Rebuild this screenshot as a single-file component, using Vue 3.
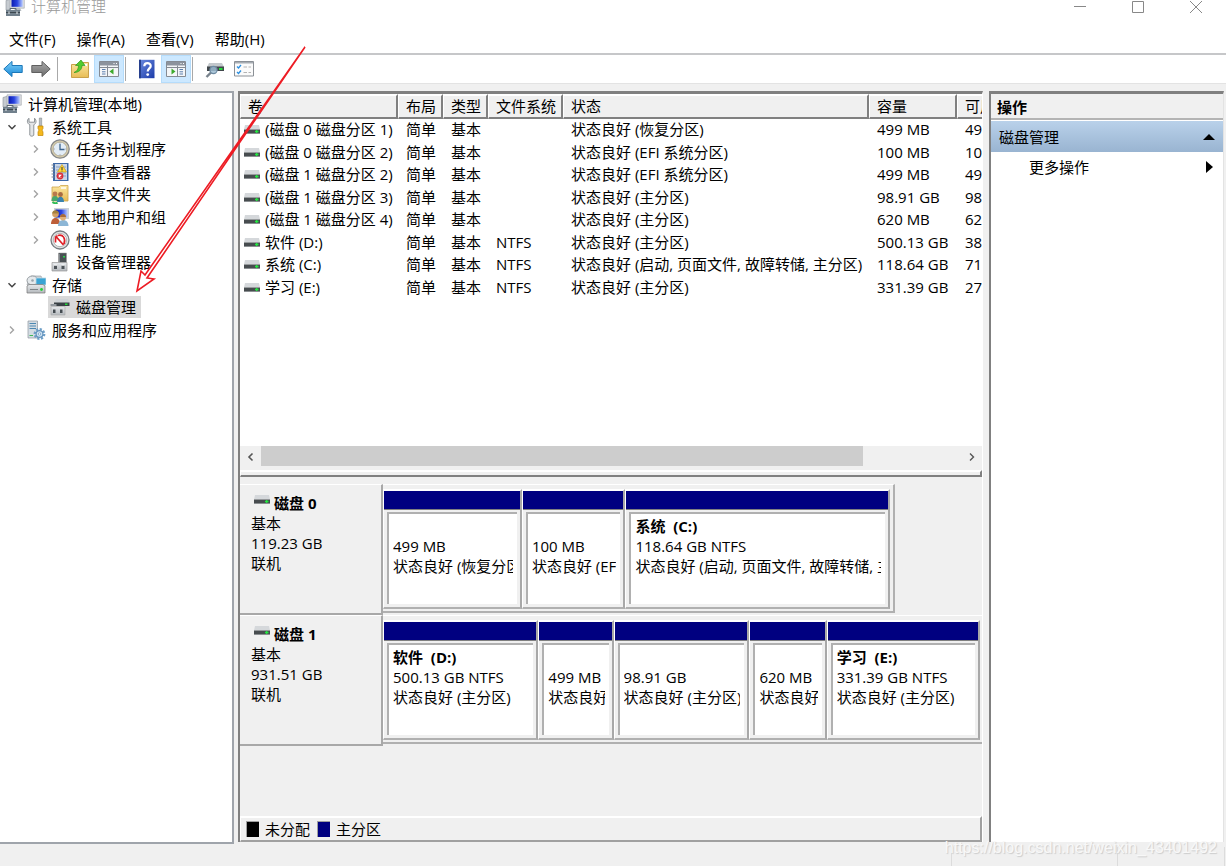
<script setup>
const menus = ['文件(F)', '操作(A)', '查看(V)', '帮助(H)']

const tools = [
  { icon: 'back', label: '后退' },
  { icon: 'forward', label: '前进' },
  { sep: true },
  { icon: 'folder-up', label: '向上一级' },
  { icon: 'tree-pane', label: '显示/隐藏控制台树', on: true },
  { sep: true },
  { icon: 'help', label: '帮助' },
  { icon: 'action-pane', label: '显示/隐藏操作窗格', on: true },
  { sep: true },
  { icon: 'rescan', label: '重新扫描磁盘' },
  { icon: 'list', label: '属性' }
]

const tree = [
  { level: 0, icon: 'computer', text: '计算机管理(本地)' },
  { level: 1, icon: 'tools', text: '系统工具', state: 'open' },
  { level: 2, icon: 'clock', text: '任务计划程序', state: 'closed' },
  { level: 2, icon: 'events', text: '事件查看器', state: 'closed' },
  { level: 2, icon: 'shared', text: '共享文件夹', state: 'closed' },
  { level: 2, icon: 'users', text: '本地用户和组', state: 'closed' },
  { level: 2, icon: 'perf', text: '性能', state: 'closed' },
  { level: 2, icon: 'device', text: '设备管理器' },
  { level: 1, icon: 'storage', text: '存储', state: 'open' },
  { level: 2, icon: 'diskmgmt', text: '磁盘管理', selected: true },
  { level: 1, icon: 'services', text: '服务和应用程序', state: 'closed' }
]

const columns = ['卷', '布局', '类型', '文件系统', '状态', '容量', '可用空间']

const volumes = [
  ['(磁盘 0 磁盘分区 1)', '简单', '基本', '', '状态良好 (恢复分区)', '499 MB', '49'],
  ['(磁盘 0 磁盘分区 2)', '简单', '基本', '', '状态良好 (EFI 系统分区)', '100 MB', '10'],
  ['(磁盘 1 磁盘分区 2)', '简单', '基本', '', '状态良好 (EFI 系统分区)', '499 MB', '49'],
  ['(磁盘 1 磁盘分区 3)', '简单', '基本', '', '状态良好 (主分区)', '98.91 GB', '98'],
  ['(磁盘 1 磁盘分区 4)', '简单', '基本', '', '状态良好 (主分区)', '620 MB', '62'],
  ['软件 (D:)', '简单', '基本', 'NTFS', '状态良好 (主分区)', '500.13 GB', '38'],
  ['系统 (C:)', '简单', '基本', 'NTFS', '状态良好 (启动, 页面文件, 故障转储, 主分区)', '118.64 GB', '71'],
  ['学习 (E:)', '简单', '基本', 'NTFS', '状态良好 (主分区)', '331.39 GB', '27']
]

const disks = [
  {
    name: '磁盘 0', size: '119.23 GB', share: 85.4,
    parts: [
      { grow: 138, name: '', size: '499 MB', status: '状态良好 (恢复分区)' },
      { grow: 102, name: '', size: '100 MB', status: '状态良好 (EFI 系统分区)' },
      { grow: 265, name: '系统  (C:)', size: '118.64 GB NTFS', status: '状态良好 (启动, 页面文件, 故障转储, 主分区)' }
    ]
  },
  {
    name: '磁盘 1', size: '931.51 GB', share: 100,
    parts: [
      { grow: 156, name: '软件  (D:)', size: '500.13 GB NTFS', status: '状态良好 (主分区)' },
      { grow: 74, name: '', size: '499 MB', status: '状态良好 (EFI 系统分区)' },
      { grow: 136, name: '', size: '98.91 GB', status: '状态良好 (主分区)' },
      { grow: 76, name: '', size: '620 MB', status: '状态良好 (主分区)' },
      { grow: 154, name: '学习  (E:)', size: '331.39 GB NTFS', status: '状态良好 (主分区)' }
    ]
  }
]
</script>

<template>
  <div class="window">
    <svg class="defs" aria-hidden="true">
      <defs>
        <linearGradient id="gBlue" x1="0" y1="0" x2="0" y2="1"><stop offset="0" stop-color="#7fd0fa" /><stop offset="1" stop-color="#1787d6" /></linearGradient>
        <linearGradient id="gGrey" x1="0" y1="0" x2="0" y2="1"><stop offset="0" stop-color="#aaa" /><stop offset="1" stop-color="#6c6c6c" /></linearGradient>
        <linearGradient id="gFolder" x1="0" y1="0" x2="0" y2="1"><stop offset="0" stop-color="#fbe7a2" /><stop offset="1" stop-color="#e8bd55" /></linearGradient>
        <linearGradient id="gScreen" x1="0" y1="0" x2="1" y2="0"><stop offset="0" stop-color="#0a1bb0" /><stop offset=".5" stop-color="#2a45e0" /><stop offset="1" stop-color="#b9ccff" /></linearGradient>
        <linearGradient id="gCase" x1="0" y1="0" x2="0" y2="1"><stop offset="0" stop-color="#e6e9ec" /><stop offset="1" stop-color="#b4b8bc" /></linearGradient>
        <linearGradient id="gHelp" x1="0" y1="0" x2="1" y2="1"><stop offset="0" stop-color="#6a8ae0" /><stop offset="1" stop-color="#1c3ba8" /></linearGradient>
      </defs>
      <symbol id="back" viewBox="0 0 20 20"><path d="M.8 10 9 2.400v4.100h10.200v7H9v4.100z" fill="url(#gBlue)" stroke="#1c77b8" /></symbol>
      <symbol id="forward" viewBox="0 0 20 20"><path d="M19.200 10 11 2.400v4.100H.8v7H11v4.100z" fill="url(#gGrey)" stroke="#606060" /></symbol>
      <symbol id="folder-up" viewBox="0 0 20 20">
        <path d="M1.500 5.500h6l1.500-2h9.500v15h-17z" fill="url(#gFolder)" stroke="#c9a14a" />
        <path d="M13 6h4" stroke="#fff" stroke-width="2" />
        <path d="M4 13.500c3-1 4.500-3.500 4.500-7H5.500L11 1l4 5.500h-3c0 4-3 7-8 7z" fill="#52cc2e" stroke="#2f9a1d" stroke-width=".7" />
      </symbol>
      <symbol id="tree-pane" viewBox="0 0 20 20">
        <path d="M.5 2.500h19v15H.5z" fill="#f4f6f8" stroke="#858b93" /><path d="M1 3h18v3.500H1z" fill="#8c939d" />
        <path d="M14.500 4.500h1M17 4.500h1" stroke="#fff" /><path d="M8.500 6.500v11M1 8.500h18" stroke="#858b93" />
        <path d="M3 10.500h3.500M3 12.800h3.500M3 15h3.500" stroke="#5a7fae" /><path d="M14.500 9.500v6l-4-3z" fill="#3daa2c" />
      </symbol>
      <symbol id="action-pane" viewBox="0 0 20 20">
        <path d="M.5 2.500h19v15H.5z" fill="#f4f6f8" stroke="#858b93" /><path d="M1 3h18v3.500H1z" fill="#8c939d" />
        <path d="M14.500 4.500h1M17 4.500h1" stroke="#fff" /><path d="M11.500 6.500v11M1 8.500h18" stroke="#858b93" />
        <path d="M13.500 10.500H17M13.500 12.800H17M13.500 15H17" stroke="#5a7fae" /><path d="M5.500 9.500v6l4-3z" fill="#3daa2c" />
      </symbol>
      <symbol id="help" viewBox="0 0 20 20">
        <path d="M2 .8h15.500v18.400H2z" fill="url(#gHelp)" /><path d="M2 .8h2v18.400H2z" fill="#27408e" />
        <path d="M7.300 7.200c0-4.200 6.400-4 6.400-.3 0 2.500-3 2.600-3 5.600" fill="none" stroke="#fff" stroke-width="2.200" /><circle cx="10.700" cy="15.600" r="1.400" fill="#fff" />
      </symbol>
      <symbol id="rescan" viewBox="0 0 20 20">
        <path d="M4 4h13l2 4H2z" fill="#c3c8cc" /><path d="M2 7.500h17V12H2z" fill="#41474b" /><path d="M14 9h3.500v2H14z" fill="#27dc3f" />
        <path d="M6.500 13 1.500 18" stroke="#78828c" stroke-width="2.400" /><circle cx="8.500" cy="11" r="3.600" fill="#9fbdd2" fill-opacity=".85" stroke="#6e8ba3" stroke-width="1.200" />
      </symbol>
      <symbol id="list" viewBox="0 0 20 20">
        <path d="M.5 2.500h19v14.500H.5z" fill="#fbfbfb" stroke="#8b9096" /><path d="M1 3h18v1.500H1z" fill="#a7acb2" />
        <path d="m3 7.500 1.500 1.500L7 6M3 13l1.500 1.500L7 11.500" fill="none" stroke="#2b8fe0" stroke-width="1.300" /><path d="M9.500 8H13M14.500 8H17M9.500 13.500H13M14.500 13.500H17" stroke="#b3b3b3" />
      </symbol>
      <symbol id="computer" viewBox="0 0 20 20">
        <path d="M1 3.500 6 2v10l-5 1z" fill="#c6cbd0" stroke="#8b9299" stroke-width=".6" />
        <path d="M5 .8h14.300v10.400H5z" fill="#dcdfe2" stroke="#9da3a9" stroke-width=".6" /><path d="M6.500 2.200h11.300v7.600H6.500z" fill="url(#gScreen)" />
        <path d="M10 11h5l1.500 3H9z" fill="#b4bac0" /><path d="M1 13h14v6H1z" fill="#71808c" /><path d="M1 15.500h14" stroke="#3d4850" />
        <path d="M5 13v-1.500h6V13" fill="none" stroke="#5b6872" /><path d="M4 14.500v2.500M12 14.500v2.500" stroke="#d8dde0" stroke-width="1.200" />
      </symbol>
      <symbol id="tools" viewBox="0 0 20 20">
        <path d="M3 1.200c-2.600 2-1.800 5.500.8 6.600v10.400c1 1.300 3 1.300 4 0V7.800c2.600-1.200 3-4.600.7-6.600v4H3z" fill="#e3e5e7" stroke="#858a8e" stroke-width=".9" />
        <path d="M13.300 1h2.400v8h-2.400z" fill="#b7bcc0" stroke="#7b8085" stroke-width=".5" /><path d="M12 9h5v2.500l-1 1.500 1 2v3.500h-5V15l1-2-1-1.500z" fill="#f5b81d" stroke="#c28809" stroke-width=".7" />
      </symbol>
      <symbol id="clock" viewBox="0 0 20 20">
        <circle cx="10" cy="10" r="9.200" fill="#d9cfae" stroke="#85878a" stroke-width="1.300" /><circle cx="10" cy="10" r="7" fill="#e3edf7" stroke="#b5ae98" />
        <path d="M10 5v5.500h4.500" fill="none" stroke="#3e658f" stroke-width="1.300" /><path d="M10 3.600v1M10 15.500v1M3.600 10h1M15.500 10h1" stroke="#888" />
      </symbol>
      <symbol id="events" viewBox="0 0 20 20">
        <path d="M3 1h15.500v18H3z" fill="#3d69a8" /><path d="M5 2h12v16H5z" fill="#c9d6e8" /><path d="M6 5h10M6 8h10M6 11h10M6 14h10" stroke="#8ba3c6" />
        <path d="M1.500 3h3M1.500 6h3M1.500 9h3M1.500 12h3M1.500 15h3" stroke="#7c8793" /><path d="m12 2.500 4.500 7.500h-9z" fill="#ffd735" stroke="#c59916" stroke-width=".6" /><path d="M12 5v3M12 8.600v.8" stroke="#333" />
        <circle cx="10" cy="14" r="3.400" fill="#db2f38" /><path d="m8.700 12.700 2.600 2.600m0-2.600-2.600 2.600" stroke="#fff" stroke-width="1.100" />
      </symbol>
      <symbol id="shared" viewBox="0 0 20 20">
        <path d="M2 3h7l1.500-1.500H18V17H2z" fill="url(#gFolder)" stroke="#cda54c" stroke-width=".8" /><path d="M11 4h5" stroke="#fff" stroke-width="1.500" />
        <path d="M1.500 17c0-7 7-7 7 0z" fill="#47a76b" /><circle cx="5" cy="10" r="2.400" fill="#b8794c" /><path d="M7 18c0-7 7-7 7 0z" fill="#3a83ad" /><circle cx="10.500" cy="10.500" r="2.400" fill="#a86b42" /><path d="M2.500 18c1.500 1.500 4 1.500 5 .5" fill="none" stroke="#2fbc56" stroke-width="2" />
      </symbol>
      <symbol id="users" viewBox="0 0 20 20">
        <path d="M4 1h15v11H4z" fill="#cdd2d7" /><path d="M5.500 2.500h12v8h-12z" fill="url(#gScreen)" />
        <path d="M1 17c0-8 9-8 9 0z" fill="#bd5e38" /><circle cx="5.500" cy="7" r="3.300" fill="#d3a064" /><path d="M2.200 6.500c0-4.500 6.500-4.500 6.500 0" fill="#a4803f" />
        <path d="M8 19c0-8 10.500-8 10.500 0z" fill="#8cb6d6" /><circle cx="13" cy="10.500" r="3" fill="#e0b179" /><path d="M10 10c0-4 6-4 6 0" fill="#a86b3a" />
      </symbol>
      <symbol id="perf" viewBox="0 0 20 20">
        <circle cx="10" cy="10" r="9" fill="#e0e2e3" stroke="#777c80" stroke-width="1.300" /><circle cx="10" cy="10" r="6.700" fill="#fff" stroke="#b5b5b5" />
        <path d="m5.500 6 8 9M5.500 12.500V7.500l2-2M8 5.500c5-1.500 8 3 6 8.500" fill="none" stroke="#df1e25" stroke-width="1.700" />
      </symbol>
      <symbol id="device" viewBox="0 0 20 20">
        <path d="M8.500 1h8v9.500h-8z" fill="#4a5054" stroke="#999" stroke-width=".5" /><path d="M13 4h2v1.500h-2z" fill="#28d84a" /><path d="M9.500 2v8" stroke="#81888d" />
        <path d="M2 10.500h15V19H2z" fill="url(#gCase)" stroke="#999" stroke-width=".7" /><path d="M4 13.500h3V17H4zM11.500 13.500h3V17h-3z" fill="#4c5358" /><path d="M4 13h3M11.500 13h3" stroke="#fff" />
      </symbol>
      <symbol id="storage" viewBox="0 0 20 20">
        <path d="M2 6.500 5 1h10l4 9H1z" fill="#cfd3d6" stroke="#92989d" stroke-width=".6" /><ellipse cx="6.500" cy="5.500" rx="5.500" ry="4.500" fill="#e5e9ec" stroke="#8f959a" stroke-width=".9" /><circle cx="6.500" cy="5.500" r="1.300" fill="#9aa5ad" />
        <path d="M10 3h10v7H10z" fill="#3aa4d4" stroke="#bed8e4" stroke-width=".8" /><path d="m1 11 2-1.500h14l2 1.500v7H1z" fill="url(#gCase)" stroke="#777" stroke-width=".7" /><path d="M4 14.500h8" stroke="#7d8488" /><circle cx="15.500" cy="14.500" r="1.400" fill="#25cf38" />
      </symbol>
      <symbol id="diskmgmt" viewBox="0 0 20 20">
        <path d="M6 2h12l1.500 4H4z" fill="#cfd3d6" /><path d="M4 5.500h15.500V9H4z" fill="#3a4145" /><path d="M15 6.500h2.500V8H15z" fill="#22dc3a" />
        <path d="M1 9.500h14V18H1z" fill="url(#gCase)" stroke="#aaa" stroke-width=".6" /><path d="M3 12.500h2.500V16H3zM10 12.500h2.500V16H10z" fill="#444b50" /><path d="M.5 8h6" stroke="#92989d" stroke-width="2" />
      </symbol>
      <symbol id="services" viewBox="0 0 20 20">
        <path d="M2 1h9.500v17H2z" fill="#d4dce3" stroke="#8c959d" stroke-width=".7" /><path d="M3.500 3.500H10M3.500 6H10M3.500 8.500H10" stroke="#4c87b1" stroke-width="1.200" /><path d="M3.500 15.500H7" stroke="#3dbb55" />
        <circle cx="13.500" cy="14" r="4.800" fill="none" stroke="#6e9fc7" stroke-width="2.200" stroke-dasharray="2.200 1.500" /><circle cx="13.500" cy="14" r="3.400" fill="#cfe2f1" stroke="#6292bd" stroke-width="1.200" /><circle cx="13.500" cy="14" r="1.200" fill="#fff" stroke="#6292bd" stroke-width=".7" />
      </symbol>
      <symbol id="drive" viewBox="0 0 16 10">
        <path d="M1 0h14l1 4.500H0z" fill="#d5d8db" /><path d="M0 4.500h16V9H0z" fill="#474c4f" /><path d="M0 8.500h16" stroke="#8b8f92" /><path d="M11 6.500h3.500M12.700 5v3" stroke="#24e541" stroke-width="1.300" />
      </symbol>
      <symbol id="chev-left" viewBox="0 0 10 10"><path d="M6.500 1.500 3 5l3.500 3.500" fill="none" stroke="currentColor" stroke-width="1.600" /></symbol>
      <symbol id="chev-right" viewBox="0 0 10 10"><path d="M3 1.500 6.500 5 3 8.500" fill="none" stroke="currentColor" stroke-width="1.400" /></symbol>
      <symbol id="chev-down" viewBox="0 0 10 10"><path d="M1.500 3.200 5 6.700l3.500-3.500" fill="none" stroke="currentColor" stroke-width="1.500" /></symbol>
    </svg>

    <header class="titlebar">
      <svg class="icon20"><use href="#computer" /></svg>
      <span class="title">计算机管理</span>
      <button class="winbtn" aria-label="最小化"><svg viewBox="0 0 14 14"><path d="M1 6.500h12" /></svg></button>
      <button class="winbtn" aria-label="最大化"><svg viewBox="0 0 14 14"><path d="M1.500 1.500h11v11h-11z" /></svg></button>
      <button class="winbtn" aria-label="关闭"><svg viewBox="0 0 14 14"><path d="m1 1 12 12M13 1 1 13" /></svg></button>
    </header>

    <nav class="menubar">
      <button v-for="m in menus" :key="m">{{ m }}</button>
    </nav>

    <div class="toolbar" role="toolbar">
      <template v-for="(t, i) in tools" :key="i">
        <span v-if="t.sep" class="sep"></span>
        <button v-else :class="{ on: t.on }" :aria-label="t.label"><svg class="icon20"><use :href="'#' + t.icon" /></svg></button>
      </template>
    </div>

    <main class="panes">
      <aside class="treepane">
        <ul class="tree">
          <li v-for="n in tree" :key="n.text" :class="'level' + n.level">
            <button v-if="n.state" class="twist" :class="n.state" :aria-label="n.state === 'open' ? '折叠' : '展开'">
              <svg><use :href="n.state === 'open' ? '#chev-down' : '#chev-right'" /></svg>
            </button>
            <span v-else-if="n.level" class="twist"></span>
            <button class="node" :class="{ selected: n.selected }">
              <svg class="icon20"><use :href="'#' + n.icon" /></svg>{{ n.text }}
            </button>
          </li>
        </ul>
      </aside>

      <section class="center">
        <div class="volumes">
          <table>
            <colgroup>
              <col class="c-vol"><col class="c-layout"><col class="c-type"><col class="c-fs"><col class="c-status"><col class="c-size"><col class="c-free">
            </colgroup>
            <thead>
              <tr><th v-for="c in columns" :key="c" scope="col">{{ c }}</th></tr>
            </thead>
            <tbody>
              <tr v-for="v in volumes" :key="v[0]">
                <td v-for="(cell, i) in v" :key="i"><svg v-if="i === 0" class="drive"><use href="#drive" /></svg>{{ cell }}</td>
              </tr>
            </tbody>
          </table>
        </div>
        <div class="scrollbar">
          <button aria-label="向左滚动"><svg><use href="#chev-left" /></svg></button>
          <div class="track"><div class="thumb"></div></div>
          <button aria-label="向右滚动"><svg><use href="#chev-right" /></svg></button>
        </div>
        <div class="splitter"></div>

        <div class="disks">
          <article v-for="d in disks" :key="d.name" class="disk">
            <div class="disklabel">
              <strong><svg class="drive"><use href="#drive" /></svg>{{ d.name }}</strong>
              <span>基本</span><span>{{ d.size }}</span><span>联机</span>
            </div>
            <div class="diskmap">
              <div class="parts" :class="{ partial: d.share < 100 }" :style="{ width: d.share + '%' }">
                <div v-for="(p, i) in d.parts" :key="i" class="part" :style="{ flexGrow: p.grow }">
                  <div class="bar"></div>
                  <div class="box">
                    <div class="info"><strong>{{ p.name }}</strong><span>{{ p.size }}</span><span>{{ p.status }}</span></div>
                  </div>
                </div>
              </div>
            </div>
          </article>
        </div>

        <footer class="legend">
          <i class="swatch black"></i><span>未分配</span>
          <i class="swatch navy"></i><span>主分区</span>
        </footer>
      </section>

      <aside class="actions">
        <h2>操作</h2>
        <button class="group">磁盘管理<svg viewBox="0 0 12 12"><path d="M0 9 6 3l6 6z" /></svg></button>
        <button class="more">更多操作<svg viewBox="0 0 12 12"><path d="m3 0 7 6-7 6z" /></svg></button>
      </aside>
    </main>

    <footer class="statusbar"><span class="s1"></span><span class="s2"></span><span class="s3"></span></footer>

    <svg class="pointer" viewBox="0 0 180 256" aria-hidden="true">
      <path d="M173 7 13 235l-4-4-4 20 17-12-7-1z" />
    </svg>
    <span class="watermark">https://blog.csdn.net/weixin_43401492</span>
  </div>
</template>

<style>
html, body { margin: 0; height: 100%; }
</style>

<style scoped>
.window {
  position: relative;
  display: flex;
  flex-direction: column;
  height: 100vh;
  overflow: hidden;
  background: #f0f0f0;
  color: #000;
  font: 15px/20px "Open Sans", "Noto Sans CJK SC", sans-serif;
}
.window * { box-sizing: border-box; }
.defs { position: absolute; width: 0; height: 0; }
button {
  border: 0;
  margin: 0;
  padding: 0;
  background: none;
  color: inherit;
  font: inherit;
  white-space: nowrap;
}
.icon20 { width: 20px; height: 20px; flex: none; display: block; }

.titlebar { display: flex; align-items: center; height: 26px; margin-top: -6px; padding: 0 1px 0 5px; background: #fff; color: #999; flex: none; }
.title { flex: 1; margin-left: 6px; padding-bottom: 2px; font-weight: 300; }
.winbtn { width: 58px; height: 26px; display: grid; place-items: center; }
.winbtn svg { width: 14px; height: 14px; fill: none; stroke: #888; }

.menubar { display: flex; align-items: flex-start; gap: 21px; height: 35px; padding: 9px 9px 0; background: #fff; border-bottom: 2px solid #c6c7c9; flex: none; }

.toolbar { display: flex; align-items: center; height: 29px; background: #fff; border-bottom: 1px solid #e3e3e3; flex: none; }
.toolbar button { display: grid; place-items: center; width: 29px; height: 28px; }
.toolbar button:first-child { width: 26px; }
.toolbar .on { background: #cce8ff; border: 1px solid #b5dcfb; width: 30px; }
.sep { width: 1px; height: 24px; margin: 0 3px; background: #a9a9a9; }
.toolbar .sep:nth-child(3) { margin: 0 7px 0 2px; }
.toolbar .sep:nth-child(6) { margin: 0 6px 0 1px; }
.toolbar .sep:nth-child(9) { margin: 0 7px 0 1px; }

.panes { display: flex; flex: 1; min-height: 0; margin-top: 7px; padding-right: 2px; }
.treepane { width: 234px; flex: none; border: 2px solid #9fa4ab; border-left: 0; background: #fff; }
.tree { display: grid; grid-auto-rows: 1fr; height: 248px; margin: 0; padding: 0; list-style: none; }
.tree li { display: flex; align-items: center; }
.level2 { padding-left: 24px; }
.twist { width: 24px; height: 20px; display: grid; place-items: center; color: #a3a3a3; }
.twist.open { color: #444; }
.twist svg { width: 10px; height: 10px; }
.node { display: flex; align-items: center; gap: 6px; height: 22px; padding: 0 5px 0 2px; }
.node.selected { background: #d9d9d9; }

.center { display: flex; flex-direction: column; flex: 1; min-width: 0; margin: 0 6px 2px 4px; border-top: 3px solid #808080; border-left: 2px solid #808080; border-right: 1px solid #fff; }
.volumes { flex: none; height: 352px; overflow: hidden; background: #fff; }
table { width: 830px; height: 205px; border-collapse: separate; border-spacing: 0; table-layout: fixed; }
.c-vol { width: 158px; }
.c-layout { width: 45px; }
.c-type { width: 45px; }
.c-fs { width: 75px; }
.c-status { width: 306px; }
.c-size { width: 88px; }
th { height: 25px; padding: 0 0 1px 7px; text-align: left; font-weight: 400; background: #f0f0f0; border: solid; border-width: 2px 2px 2px 1px; border-color: #fff #808080 #808080 #fff; line-height: 20px; white-space: nowrap; }
td { padding: 0 0 2px 8px; white-space: nowrap; line-height: 20px; }
td:first-child { padding-left: 4px; }
.drive { width: 16px; height: 10px; }
td .drive { margin-right: 5px; }

.scrollbar { display: flex; height: 21px; background: #f0f0f0; flex: none; }
.scrollbar button { width: 21px; display: grid; place-items: center; color: #555; }
.scrollbar svg { width: 10px; height: 10px; }
.track { flex: 1; }
.thumb { width: 86%; height: 20px; background: #cdcdcd; }
.splitter { height: 7px; margin-top: 3px; flex: none; border: solid; border-width: 2px 2px 2px 1px; border-color: #fff #808080 #808080 #fff; }

.disks { flex: 1; padding-top: 7px; min-height: 0; overflow: hidden; }
.disk { display: flex; height: 131px; }
.disklabel { display: flex; flex-direction: column; width: 143px; padding: 8px 0 0 11px; flex: none; border: solid; border-width: 1px 2px 2px 0; border-color: #fff #a8a8a8 #a8a8a8; }
.disklabel strong { display: flex; gap: 4px; padding-left: 3px; font-weight: 700; }
.disklabel .drive { margin-top: 2px; }
.diskmap { flex: 1; min-width: 0; }
.parts { display: flex; height: 129px; padding: 4px 2px 2px 0; border: solid; border-width: 1px 0 2px; border-color: #fff transparent #b0b0b0; }
.parts.partial { border-right: 2px solid #b0b0b0; padding-right: 3px; }
.part { display: flex; flex-direction: column; flex-basis: 0; min-width: 0; border: solid; border-width: 2px 2px 2px 1px; border-color: #fff #a8a8a8 #b0b0b0 #fff; }
.bar { height: 19px; flex: none; background: #000080; border-bottom: 1px solid #808080; }
.box { flex: 1; margin: 2px 3px 3px; padding: 2px 4px; background: #fff; border: solid; border-width: 2px 0 0 2px; border-color: #b0b0b0; min-height: 0; }
.info { display: flex; flex-direction: column; overflow: hidden; white-space: pre; }
.info strong { height: 20px; font-weight: 700; }

.legend { display: flex; align-items: center; height: 26px; padding: 0 0 1px 5px; flex: none; border: solid; border-width: 2px 2px 2px 1px; border-color: #fff #a0a0a0 #a0a0a0 #fff; }
.legend span { margin: 0 7px 0 6px; }
.swatch { width: 13px; height: 16px; border: solid; border-width: 1px 0 0 1px; border-color: #a0a0a0; }
.black { background: #000; }
.navy { background: #000080; }

.actions { display: flex; flex-direction: column; width: 235px; flex: none; margin-bottom: 2px; background: #fff; border: solid; border-width: 3px 1px 0 2px; border-color: #808080 #e3e3e3 #fff #808080; }
h2 { margin: 0; height: 26px; padding: 3px 6px 0; font-size: 15px; line-height: 20px; font-weight: 700; background: #f0f0f0; border-bottom: 2px solid #b4b4b4; }
.group { display: flex; align-items: center; justify-content: space-between; height: 31px; margin-top: 1px; padding: 0 8px; background: linear-gradient(#b9d1ea, #99b4d1); }
.more { display: flex; align-items: center; justify-content: space-between; height: 30px; padding: 0 8px 0 38px; }
.actions svg { width: 12px; height: 12px; fill: #000; }

.statusbar { display: flex; justify-content: flex-end; height: 22px; flex: none; }
.statusbar span { border-left: 1px solid #dcdcdc; margin-top: 3px; }
.s1 { width: 166px; }
.s2 { width: 107px; }
.s3 { width: 2px; }

.pointer { position: absolute; left: 132px; top: 40px; width: 180px; height: 256px; pointer-events: none; }
.pointer path { fill: #fff; stroke: #ed1c24; stroke-width: 1.600; }
.watermark { position: absolute; right: 9px; bottom: 8px; color: #f8f8f8; font: 16px/20px "Liberation Sans", sans-serif; text-shadow: 1px 1px 1px #ccc; }
</style>
